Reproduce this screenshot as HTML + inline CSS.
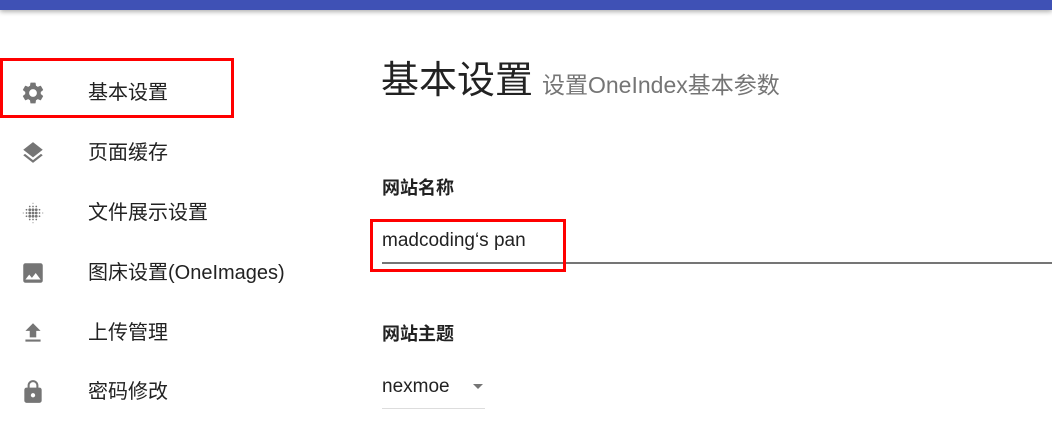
<!DOCTYPE html>
<html><head><meta charset="utf-8"><style>
body{margin:0;width:1052px;height:423px;overflow:hidden;background:#fff;font-family:"Liberation Sans","Noto Sans CJK SC",sans-serif;position:relative}
.bar{position:absolute;left:0;top:0;width:1052px;height:10px;background:#3f51b5;box-shadow:0 2px 5px rgba(0,0,0,.3)}
.item{position:absolute;left:88px;font-size:20px;color:#222;line-height:22px}
.ic{position:absolute;left:20px;width:26px;height:26px}
.red{position:absolute;border:3px solid #f00;box-sizing:border-box}
.abs{position:absolute}
</style></head><body>
<div class="bar"></div>
<div class="red" style="left:0;top:58px;width:234px;height:60px"></div>
<svg class="ic" style="top:80px" viewBox="0 0 24 24"><path fill="#757575" d="M19.14 12.94c.04-.3.06-.61.06-.94s-.02-.64-.07-.94l2.03-1.58a.49.49 0 0 0 .12-.61l-1.92-3.32a.49.49 0 0 0-.59-.22l-2.39.96c-.5-.38-1.030-.7-1.62-.94l-.36-2.54a.48.48 0 0 0-.48-.41h-3.84a.47.47 0 0 0-.47.41l-.36 2.54c-.59.24-1.13.57-1.62.94l-2.39-.96a.48.48 0 0 0-.59.22L2.74 8.87a.47.47 0 0 0 .12.61l2.03 1.58c-.05.3-.09.63-.09.94s.02.64.07.94l-2.03 1.58a.49.49 0 0 0-.12.61l1.92 3.32c.12.22.37.29.59.22l2.39-.96c.5.38 1.03.7 1.62.94l.36 2.54c.05.24.24.41.48.41h3.840c.24 0 .44-.17.47-.41l.36-2.54c.59-.24 1.13-.56 1.62-.94l2.39.96c.22.08.47 0 .59-.22l1.92-3.32a.47.47 0 0 0-.12-.61l-2.01-1.58zM12 15.6A3.6 3.6 0 1 1 12 8.4a3.6 3.6 0 0 1 0 7.2z"/></svg>
<div class="item" style="top:82px">基本设置</div>
<svg class="ic" style="top:140px" viewBox="0 0 24 24"><path fill="#757575" d="M11.99 18.54l-7.37-5.73L3 14.07l9 7 9-7-1.63-1.27-7.38 5.74zM12 16l7.36-5.73L21 9l-9-7-9 7 1.63 1.27L12 16z"/></svg>
<div class="item" style="top:142px">页面缓存</div>
<svg class="ic" style="top:200px" viewBox="0 0 24 24" fill="#757575"><g><circle cx="9" cy="9" r="1.3"/><circle cx="12" cy="9" r="1.3"/><circle cx="15" cy="9" r="1.3"/><circle cx="9" cy="12" r="1.3"/><circle cx="12" cy="12" r="1.3"/><circle cx="15" cy="12" r="1.3"/><circle cx="9" cy="15" r="1.3"/><circle cx="12" cy="15" r="1.3"/><circle cx="15" cy="15" r="1.3"/><circle cx="6" cy="9" r=".8"/><circle cx="6" cy="12" r=".8"/><circle cx="6" cy="15" r=".8"/><circle cx="18" cy="9" r=".8"/><circle cx="18" cy="12" r=".8"/><circle cx="18" cy="15" r=".8"/><circle cx="9" cy="6" r=".8"/><circle cx="12" cy="6" r=".8"/><circle cx="15" cy="6" r=".8"/><circle cx="9" cy="18" r=".8"/><circle cx="12" cy="18" r=".8"/><circle cx="15" cy="18" r=".8"/><circle cx="3" cy="12" r=".5"/><circle cx="21" cy="12" r=".5"/><circle cx="12" cy="3" r=".5"/><circle cx="12" cy="21" r=".5"/></g></svg>
<div class="item" style="top:202px">文件展示设置</div>
<svg class="ic" style="top:260px" viewBox="0 0 24 24"><path fill="#757575" d="M21 19V5c0-1.1-.9-2-2-2H5c-1.1 0-2 .9-2 2v14c0 1.1.9 2 2 2h14c1.1 0 2-.9 2-2zM8.5 13.5l2.5 3.01L14.5 12l4.5 6H5l3.5-4.5z"/></svg>
<div class="item" style="top:262px">图床设置(OneImages)</div>
<svg class="ic" style="top:320px" viewBox="0 0 24 24"><path fill="#757575" d="M5 20h14v-2H5v2zm0-10h4v6h6v-6h4l-7-7-7 7z"/></svg>
<div class="item" style="top:322px">上传管理</div>
<svg class="ic" style="top:379px" viewBox="0 0 24 24"><path fill="#757575" d="M18 8h-1V6c0-2.76-2.24-5-5-5S7 3.24 7 6v2H6c-1.1 0-2 .9-2 2v10c0 1.1.9 2 2 2h12c1.1 0 2-.9 2-2V10c0-1.1-.9-2-2-2zm-6 9c-1.1 0-2-.9-2-2s.9-2 2-2 2 .9 2 2-.9 2-2 2zm3.1-9H8.9V6c0-1.71 1.39-3.1 3.1-3.1 1.71 0 3.1 1.39 3.1 3.1v2z"/></svg>
<div class="item" style="top:381px">密码修改</div>

<div class="abs" style="left:381px;top:58px;font-size:38px;color:#222;line-height:46px">基本设置</div>
<div class="abs" style="left:542px;top:70px;font-size:23px;color:#757575;line-height:30px">设置OneIndex基本参数</div>
<div class="abs" style="left:382px;top:174px;font-size:18px;font-weight:bold;color:#222">网站名称</div>
<div class="abs" style="left:382px;top:230px;font-size:19px;color:#222">madcoding‘s pan</div>
<div class="abs" style="left:382px;top:262px;width:670px;height:2px;background:#757575"></div>
<div class="red" style="left:370px;top:219px;width:196px;height:53px"></div>
<div class="abs" style="left:382px;top:320px;font-size:18px;font-weight:bold;color:#222">网站主题</div>
<div class="abs" style="left:382px;top:376px;font-size:19px;color:#222">nexmoe</div>
<div class="abs" style="left:473px;top:384px;width:0;height:0;border-left:5px solid transparent;border-right:5px solid transparent;border-top:5px solid #757575"></div>
<div class="abs" style="left:382px;top:408px;width:103px;height:1px;background:#ddd"></div>
</body></html>
